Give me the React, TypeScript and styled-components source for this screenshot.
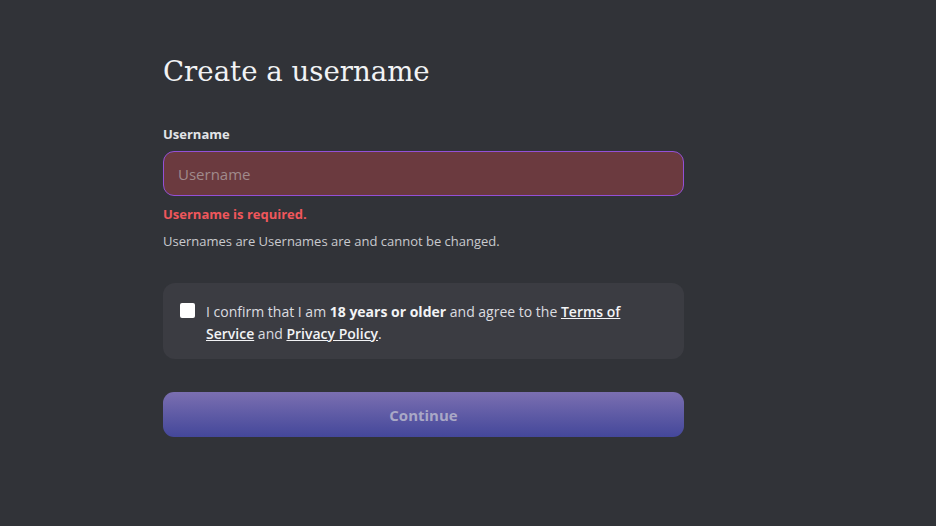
import React from "react";
import styled, { createGlobalStyle } from "styled-components";

const Global = createGlobalStyle`
  html, body { margin: 0; padding: 0; background: #313338; }
  body { font-family: "Open Sans", "Noto Sans", sans-serif; }
  * { box-sizing: border-box; }
`;

const Page = styled.div`
  width: 936px;
  height: 526px;
  background: #313338;
  padding: 53px 0 0 163px;
`;

const Form = styled.div`
  width: 521px;
  display: flex;
  flex-direction: column;
`;

const Title = styled.h1`
  margin: 0;
  font-family: "DejaVu Serif", Georgia, serif;
  font-weight: 400;
  font-size: 27.6px;
  line-height: 38px;
  color: #f2f3f5;
`;

const Label = styled.label`
  margin-top: 34px;
  font-size: 13px;
  font-weight: 700;
  color: #e3e5e8;
  line-height: 18px;
`;

const Input = styled.input`
  margin-top: 8px;
  height: 45px;
  width: 100%;
  border: 1px solid #9350d6;
  border-radius: 11px;
  background: #6b3a3f;
  padding: 0 14px;
  font-family: inherit;
  font-size: 15px;
  color: #e3e5e8;
  outline: none;
  caret-color: #c0b0b0;
  &::placeholder { color: #a08a8c; }
`;

const ErrorText = styled.div`
  margin-top: 9px;
  font-size: 13px;
  font-weight: 700;
  color: #f0575c;
  line-height: 18px;
`;

const Helper = styled.div`
  margin-top: 9px;
  font-size: 13px;
  color: #c9cace;
  line-height: 18px;
`;

const Card = styled.div`
  margin-top: 33px;
  background: #3b3c42;
  border-radius: 12px;
  padding: 18px 20px 14px 17px;
  display: flex;
  gap: 11px;
  align-items: flex-start;
`;

const Box = styled.span`
  flex: none;
  width: 15px;
  height: 15px;
  margin-top: 2px;
  background: #ffffff;
  border-radius: 2px;
`;

const ConsentText = styled.p`
  margin: 0;
  font-size: 14px;
  line-height: 22px;
  color: #dcdde0;
  max-width: 420px;
  b { font-weight: 700; color: #f2f3f5; }
  a { color: #f2f3f5; font-weight: 600; text-decoration: underline; }
`;

const Button = styled.button`
  margin-top: 33px;
  height: 45px;
  width: 100%;
  border: none;
  border-radius: 11px;
  background: linear-gradient(180deg, #7b6fb1 0%, #5c59a4 55%, #44479a 100%);
  color: #a9a8c6;
  font-family: inherit;
  font-weight: 700;
  font-size: 15px;
  cursor: not-allowed;
`;

export default function App() {
  return (
    <Page>
      <Global />
      <Form>
        <Title>Create a username</Title>
        <Label htmlFor="u">Username</Label>
        <Input id="u" placeholder="Username" autoFocus />
        <ErrorText>Username is required.</ErrorText>
        <Helper>Usernames are Usernames are and cannot be changed.</Helper>
        <Card>
          <Box />
          <ConsentText>
            I confirm that I am <b>18 years or older</b> and agree to the{" "}
            <a>Terms of Service</a> and <a>Privacy Policy</a>.
          </ConsentText>
        </Card>
        <Button disabled>Continue</Button>
      </Form>
    </Page>
  );
}
